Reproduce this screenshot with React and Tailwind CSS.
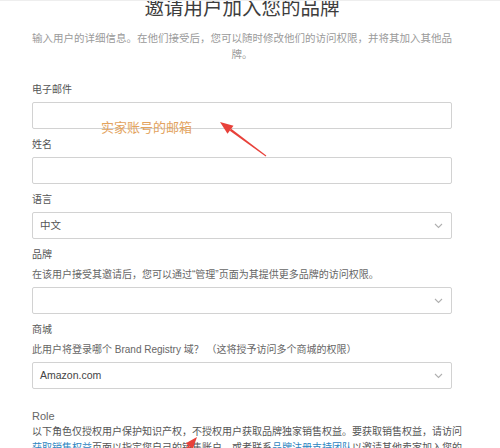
import React from 'react'

const font = "font-['Liberation_Sans','Noto_Sans_CJK_SC',sans-serif]"

function Chevron() {
  return (
    <svg width="9" height="6" viewBox="0 0 9 6" className="shrink-0">
      <polyline points="1,1 4.5,4.5 8,1" fill="none" stroke="#b0b0b0" strokeWidth="1.1" />
    </svg>
  )
}

function Label({ children }) {
  return <div className="text-[10px] leading-[16px] text-[#555]">{children}</div>
}

function Hint({ children }) {
  return <div className="mt-1 text-[10px] leading-[16px] text-[#666]">{children}</div>
}

function TextBox() {
  return <div className="mt-1 h-[27px] rounded-[2px] border border-[#d2d2d2] bg-white" />
}

function SelectBox({ value, big }) {
  return (
    <div className="mt-1 h-[27px] rounded-[2px] border border-[#d2d2d2] bg-white flex items-center justify-between pl-[7px] pr-[8px]">
      <span className={big ? 'text-[10.5px] text-[#444]' : 'text-[10.5px] text-[#555]'}>{value}</span>
      <Chevron />
    </div>
  )
}

export default function App() {
  return (
    <div className={`relative w-[500px] h-[448px] overflow-hidden bg-white border-t border-[#eeeeee] ${font}`}>
      <div className="pl-[32px]">
        <div className="w-[420px]">
          {/* header */}
          <h1 className="-mt-[3px] text-center text-[19.5px] leading-[20px] text-[#3d3d3d]">邀请用户加入您的品牌</h1>
          <p className="-mx-1 mt-[13px] text-center text-[10.5px] leading-[15.5px] text-[#9a9a9a]">
            输入用户的详细信息。在他们接受后，您可以随时修改他们的访问权限，并将其加入其他品牌。
          </p>

          {/* form */}
          <div className="mt-[20px]">
            <Label>电子邮件</Label>
            <TextBox />
          </div>
          <div className="mt-[8px]">
            <Label>姓名</Label>
            <TextBox />
          </div>
          <div className="mt-[8px]">
            <Label>语言</Label>
            <SelectBox value="中文" />
          </div>
          <div className="mt-[8px]">
            <Label>品牌</Label>
            <Hint>在该用户接受其邀请后，您可以通过“管理”页面为其提供更多品牌的访问权限。</Hint>
            <SelectBox value="" />
          </div>
          <div className="mt-[8px]">
            <Label>商城</Label>
            <Hint>此用户将登录哪个 Brand Registry 域？ （这将授予访问多个商城的权限）</Hint>
            <SelectBox value="Amazon.com" big />
          </div>

          {/* role */}
          <div className="mt-[19px]">
            <div className="text-[11px] leading-[16px] text-[#666]">Role</div>
            <p className="w-[436px] text-[10px] leading-[16px] text-[#555]">
              以下角色仅授权用户保护知识产权，不授权用户获取品牌独家销售权益。要获取销售权益，请访问
              <span className="text-[#2e86c1]">获取销售权益</span>页面以指定您自己的销售账户，或者联系
              <span className="text-[#2e86c1]">品牌注册支持团队</span>以邀请其他卖家加入您的品牌。
            </p>
          </div>
        </div>
      </div>

      {/* annotations */}
      <div className="absolute left-[101px] top-[119px] text-[13px] leading-[16px] text-[#e3a35e]">实家账号的邮箱</div>
      <svg className="absolute left-0 top-0 pointer-events-none" width="500" height="448">
        <polygon points="220,121 233.5,124.7 227.5,132.7" fill="#e8413a" />
        <polygon points="231.2,127.7 229.8,129.7 265.7,155.4 266.3,154.6" fill="#e8413a" />
        <polygon points="197,436 192.7,448.1 185.8,442.3" fill="#e8413a" />
        <polygon points="190.2,445.9 188.3,444.5 174.5,461.6 175.5,462.4" fill="#e8413a" />
      </svg>
    </div>
  )
}
